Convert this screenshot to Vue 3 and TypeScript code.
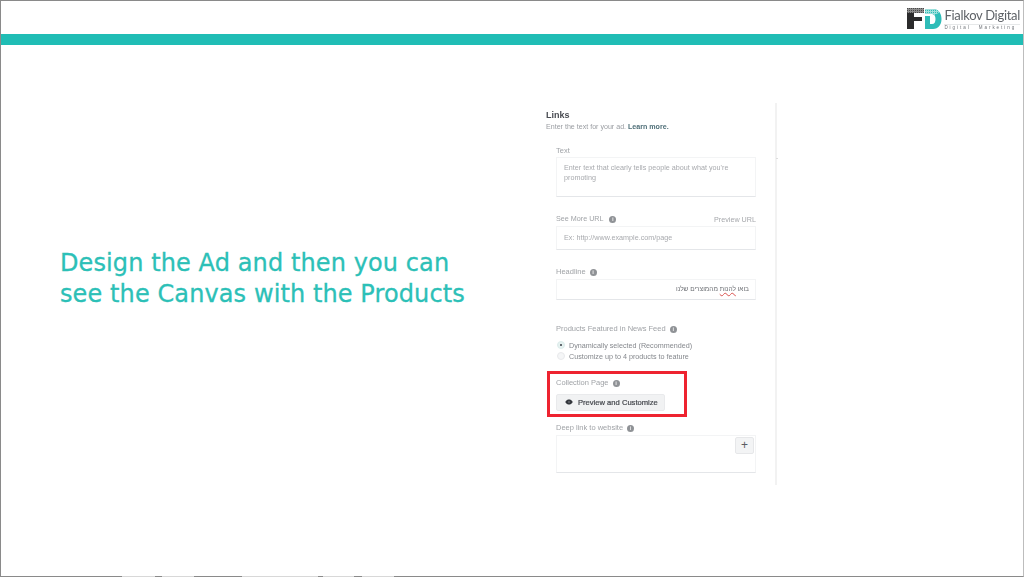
<script setup lang="ts">
const footerGaps = [
  { left: 121, width: 33 },
  { left: 161, width: 32 },
  { left: 241, width: 37 },
  { left: 278, width: 39 },
  { left: 322, width: 31 },
  { left: 361, width: 32 },
]
</script>

<template>
  <div class="slide">
    <header class="top">
      <div class="logo">
        <svg class="mark" width="35" height="22" viewBox="0 0 35 22">
          <defs>
            <pattern id="dots" width="2" height="2" patternUnits="userSpaceOnUse">
              <rect width="2" height="2" fill="#8c8c8c" />
              <rect width="1" height="1" fill="#4a4a4a" />
            </pattern>
            <pattern id="tealdots" width="2" height="2" patternUnits="userSpaceOnUse">
              <rect width="2" height="2" fill="#9fe0dc" />
              <rect width="1" height="1" fill="#2dbdb6" />
            </pattern>
          </defs>
          <path d="M0 0H17V5H0Z" fill="url(#dots)" />
          <path d="M0 5H7V21H0Z" fill="#2b2b2c" />
          <path d="M7 9H15V13H7Z" fill="#2b2b2c" />
          <path d="M18 1H26C31.500 1 34.500 5.500 34.500 11S31.500 21 26 21H18V16H25C27.500 16 28.500 14 28.500 11S27.500 6 25 6H18Z" fill="#2fbdb8" />
          <path d="M18 1H26C29 1 31 2.300 32.500 4.500L27.500 7C26.800 6.300 26 6 25 6H18Z" fill="url(#tealdots)" />
          <path d="M18 8H23V21H18Z" fill="#2fbdb8" />
        </svg>
        <div class="brand">
          <div class="brand-name">Fialkov Digital</div>
          <div class="brand-sub">Digital Marketing</div>
        </div>
      </div>
    </header>
    <div class="bar"></div>

    <main class="content">
      <div class="lead">
        <h1>Design the Ad and then you can<br />see the Canvas with the Products</h1>
      </div>

      <section class="panel">
        <div class="panel-inner">
          <h2>Links</h2>
          <p class="hint">Enter the text for your ad. <a>Learn more.</a></p>

          <div class="fields">
            <label class="lbl first">Text</label>
            <div class="box box-text">Enter text that clearly tells people about what you're promoting</div>

            <div class="lbl-row url-row">
              <label class="lbl small">See More URL <i class="info wide">i</i></label>
              <span class="preview-url">Preview URL</span>
            </div>
            <div class="box box-url">Ex: http://www.example.com/page</div>

            <label class="lbl headline">Headline <i class="info">i</i></label>
            <div class="box box-head" dir="rtl">בואו <u>להנות</u> מהמוצרים שלנו</div>

            <label class="lbl products">Products Featured in News Feed <i class="info">i</i></label>
            <div class="radio"><span class="dot on"></span>Dynamically selected (Recommended)</div>
            <div class="radio"><span class="dot"></span>Customize up to 4 products to feature</div>

            <div class="collection">
              <label class="lbl">Collection Page <i class="info">i</i></label>
              <button class="preview-btn">
                <svg width="8" height="6" viewBox="0 0 10 8">
                  <path d="M0 4C1.500 1.400 3.200.6 5 .6S8.500 1.400 10 4C8.500 6.600 6.800 7.400 5 7.400S1.500 6.600 0 4Z" fill="#34373d" />
                  <circle cx="5" cy="4" r=".9" fill="#9a9ca0" />
                </svg>
                Preview and Customize
              </button>
            </div>

            <label class="lbl deep">Deep link to website <i class="info">i</i></label>
            <div class="box box-deep"><span class="plus">+</span></div>
          </div>
        </div>
        <div class="tick"></div>
      </section>
    </main>

    <div class="frame-gaps">
      <span v-for="g in footerGaps" :key="g.left" class="gap" :style="{ left: g.left + 'px', width: g.width + 'px' }"></span>
    </div>
  </div>
</template>

<style>
html, body { margin: 0; background: #fff; }
</style>

<style scoped>
.slide {
  position: relative;
  width: 1024px;
  height: 577px;
  box-sizing: border-box;
  border: 1px solid #8a8a8a;
  border-right-color: #bdbdbd;
  background: #fff;
  display: flex;
  flex-direction: column;
  font-family: "Liberation Sans", Arial, sans-serif;
}
.top {
  height: 33px;
  display: flex;
  justify-content: flex-end;
}
.logo {
  display: flex;
  align-items: flex-start;
  gap: 2px;
  padding: 7px 3px 0 0;
  filter: blur(0.4px);
}
.mark { display: block; }
.brand-name {
  font-family: Lato, sans-serif;
  font-size: 13px;
  line-height: 15px;
  letter-spacing: -0.3px;
  color: #5f6368;
  white-space: nowrap;
}
.brand-sub {
  margin-top: 1px;
  font-size: 4.5px;
  line-height: 6px;
  letter-spacing: 1.95px;
  word-spacing: 5px;
  color: #6d7176;
  border-top: 1px solid #e6e8e9;
  white-space: nowrap;
}
.bar {
  height: 11px;
  background: #20bdb5;
}
.content {
  flex: 1;
  display: flex;
  min-height: 0;
}
.lead {
  width: 545px;
  box-sizing: border-box;
  padding: 203px 0 0 59px;
}
h1 {
  margin: 0;
  font-family: "DejaVu Sans", sans-serif;
  font-weight: 400;
  font-size: 24px;
  line-height: 31px;
  letter-spacing: 0.1px;
  color: #2cc0b7;
  -webkit-text-stroke: 0.3px #2cc0b7;
  white-space: nowrap;
}
.panel {
  position: relative;
  margin-top: 58px;
  width: 231px;
  height: 382px;
  box-sizing: border-box;
  border-right: 2px solid #f2f2f2;
  filter: blur(0.45px);
}
.tick {
  position: absolute;
  right: -3px;
  top: 55px;
  width: 2px;
  height: 1px;
  background: #ddd;
}
h2 {
  margin: 7px 0 0;
  font-size: 9px;
  line-height: 11px;
  font-weight: 700;
  color: #4a4d53;
}
.hint {
  margin: 1px 0 0;
  font-size: 7.1px;
  line-height: 10px;
  color: #9a9da2;
}
.hint a { color: #4f6f78; font-weight: 700; }
.fields {
  display: flex;
  flex-direction: column;
  align-items: flex-start;
  width: 200px;
  margin-left: 10px;
}
.lbl {
  display: block;
  font-size: 7.5px;
  line-height: 10px;
  color: #a0a3a7;
  white-space: nowrap;
}
.lbl.small { font-size: 7.2px; }
.lbl.first { margin-top: 14px; }
.info {
  display: inline-block;
  width: 7px;
  height: 7px;
  margin-left: 2px;
  border-radius: 50%;
  background: #8f9296;
  color: #e8e8e8;
  font-size: 6px;
  line-height: 7px;
  font-style: normal;
  font-weight: 700;
  text-align: center;
  vertical-align: 0;
}
.info.wide { margin-left: 4px; }
.box {
  box-sizing: border-box;
  width: 100%;
  border: 1px solid #f3f4f5;
  border-bottom-color: #e4e6e9;
  font-size: 7.2px;
  line-height: 10px;
  color: #a8aaae;
  background: #fff;
}
.box-text {
  height: 40px;
  margin-top: 1px;
  padding: 5px 7px;
}
.lbl-row {
  display: flex;
  justify-content: space-between;
  align-items: flex-end;
  width: 100%;
}
.url-row { margin-top: 17px; }
.preview-url {
  font-size: 7.2px;
  line-height: 10px;
  color: #a6a8ac;
  transform: translateY(1px);
}
.box-url {
  height: 24px;
  margin-top: 2px;
  padding: 6px 7px;
}
.lbl.headline { margin-top: 17px; }
.box-head {
  height: 21px;
  margin-top: 2px;
  padding: 4px 6px;
  color: #6a6d72;
  font-size: 6.5px;
}
.box-head u {
  text-decoration: underline wavy #d9534f 0.5px;
}
.lbl.products { margin-top: 24px; }
.radio {
  display: flex;
  align-items: center;
  gap: 4px;
  height: 11px;
  font-size: 7.2px;
  color: #85888d;
  white-space: nowrap;
}
.lbl.products + .radio { margin-top: 5.5px; }
.dot {
  position: relative;
  width: 6px;
  height: 6px;
  margin-left: 1px;
  border-radius: 50%;
  background: #f5f6f7;
  border: 1px solid #e8e9eb;
}
.dot.on { background: #e6f2f1; border-color: #dcebea; }
.dot.on::after {
  content: "";
  position: absolute;
  left: 2px;
  top: 2px;
  width: 2px;
  height: 2px;
  border-radius: 50%;
  background: #3a3d44;
}
.collection {
  box-sizing: border-box;
  margin: 9px 0 0 -9px;
  padding: 4.4px 21px 0 6px;
  border: 3px solid #ee2330;
  width: 140px;
  height: 46px;
  flex: none;
}
.preview-btn {
  display: flex;
  align-items: center;
  gap: 5px;
  box-sizing: border-box;
  width: 109px;
  height: 17px;
  margin-top: 6px;
  padding: 0 0 0 8px;
  border: 1px solid #e9eaec;
  border-radius: 2px;
  background: #f1f2f3;
  font-family: inherit;
  font-size: 7.600px;
  font-weight: 400;
  color: #44474d;
  white-space: nowrap;
  -webkit-text-stroke: 0.2px #44474d;
}
.lbl.deep { margin-top: 6.4px; }
.box-deep {
  position: relative;
  height: 38px;
  margin-top: 2px;
}
.plus {
  position: absolute;
  right: 1px;
  top: 1px;
  width: 19px;
  height: 17px;
  box-sizing: border-box;
  border: 1px solid #e6e7e9;
  border-radius: 2px;
  background: #f3f4f5;
  color: #5a5d62;
  font-size: 12px;
  line-height: 15px;
  text-align: center;
}
.frame-gaps .gap {
  position: absolute;
  bottom: -1px;
  height: 1px;
  background: #d8d8d8;
}
</style>
